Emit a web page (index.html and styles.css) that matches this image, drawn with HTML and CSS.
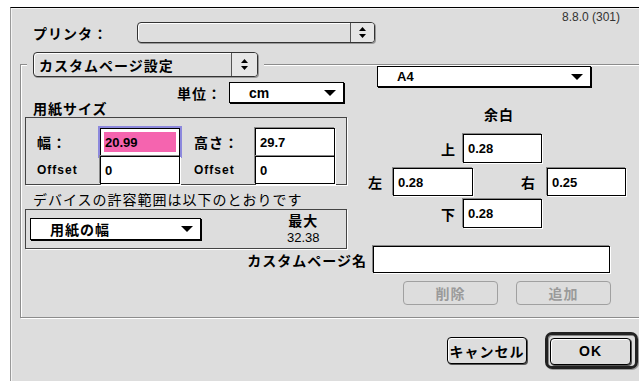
FILE: index.html
```html
<!DOCTYPE html>
<html lang="ja">
<head>
    <meta charset="UTF-8">
    <meta name="viewport" content="width=device-width, initial-scale=1.0">
    <title>カスタムページ設定</title>
    <link rel="stylesheet" href="styles.css">
</head>
<body>

<div class="window">
    <div class="header">
        <span class="label printer-label">プリンタ：</span>
        <div class="popup printer-popup">
            <span class="popup-text"></span>
            <span class="popup-arrows">
                <svg width="7" height="11" viewBox="0 0 7 11"><polygon points="0,4 3.5,0 7,4" /><polygon points="0,7 3.5,11 7,7" /></svg>
            </span>
        </div>
        <span class="version">8.8.0 (301)</span>
    </div>

    <div class="group">
        <div class="left">
            <div class="legend">
                <div class="popup legend-popup">
                    <span class="popup-text">カスタムページ設定</span>
                    <span class="popup-arrows">
                        <svg width="7" height="11" viewBox="0 0 7 11"><polygon points="0,4 3.5,0 7,4" /><polygon points="0,7 3.5,11 7,7" /></svg>
                    </span>
                </div>
            </div>

            <div class="unit-row">
                <span class="label">単位：</span>
                <div class="menu unit-menu">
                    <span class="menu-text">cm</span>
                    <svg class="menu-arrow" width="12" height="6" viewBox="0 0 12 6"><polygon points="0,0 12,0 6,6" /></svg>
                </div>
            </div>

            <div class="label box-title">用紙サイズ</div>
            <div class="box size-box">
                <span class="label cell-label">幅：</span>
                <div class="field focused"><span class="selected">20.99</span></div>
                <span class="label cell-label second">高さ：</span>
                <div class="field">29.7</div>
                <span class="cell-label latin">Offset</span>
                <div class="field">0</div>
                <span class="cell-label second latin">Offset</span>
                <div class="field">0</div>
            </div>

            <div class="box-title plain">デバイスの許容範囲は以下のとおりです</div>
            <div class="box range-box">
                <div class="menu paper-menu">
                    <span class="menu-text label">用紙の幅</span>
                    <svg class="menu-arrow" width="12" height="6" viewBox="0 0 12 6"><polygon points="0,0 12,0 6,6" /></svg>
                </div>
                <div class="max">
                    <span class="label max-title">最大</span>
                    <span class="max-value">32.38</span>
                </div>
            </div>
        </div>

        <div class="right">
            <div class="menu a4-menu">
                <span class="menu-text latin-bold">A4</span>
                <svg class="menu-arrow" width="12" height="6" viewBox="0 0 12 6"><polygon points="0,0 12,0 6,6" /></svg>
            </div>

            <div class="label margin-title">余白</div>

            <div class="margin-row center-row first">
                <span class="label side-label">上</span>
                <div class="field margin-field tall">0.28</div>
            </div>
            <div class="margin-row side-row">
                <span class="label side-label">左</span>
                <div class="field margin-field wide">0.28</div>
                <span class="label side-label right-label">右</span>
                <div class="field margin-field">0.25</div>
            </div>
            <div class="margin-row center-row last">
                <span class="label side-label">下</span>
                <div class="field margin-field tall">0.28</div>
            </div>
        </div>

        <div class="name-row">
            <span class="label name-label">カスタムページ名</span>
            <div class="field name-field"></div>
        </div>

        <div class="button-row">
            <button class="btn disabled">削除</button>
            <button class="btn disabled">追加</button>
        </div>
    </div>

    <div class="dialog-buttons">
        <button class="btn cancel">キャンセル</button>
        <div class="default-ring">
            <button class="btn ok">OK</button>
        </div>
    </div>
</div>

</body>
</html>
```

FILE: styles.css
```css
body {
    margin: 0;
    background: #fff;
    overflow: hidden;
    font-family: "Noto Sans CJK JP", "Liberation Sans", sans-serif;
    color: #000;
}
.window {
    margin: 7px 0 0 10px;
    height: 374px;
    background: #dddddd;
    border-top: 1px solid #000;
    border-left: 1px solid #999;
    box-shadow: inset 1px 1px 0 #f4f4f4;
    overflow: hidden;
}
.label {
    font-size: 14px;
    font-weight: 700;
    letter-spacing: 1px;
    line-height: 16px;
    white-space: nowrap;
}

/* header */
.header {
    display: flex;
    align-items: center;
    margin-top: 14px;
    height: 21px;
    padding-left: 22px;
}
.printer-label {
    width: 104px;
}
.version {
    align-self: flex-start;
    margin-top: -12px;
    margin-left: 187px;
    font-family: "Liberation Sans", sans-serif;
    font-size: 12px;
    line-height: 14px;
    color: #333;
}

/* new style popups */
.popup {
    display: flex;
    box-sizing: border-box;
    border: 1px solid #333;
    border-radius: 4px;
    background: #dedede;
    box-shadow: inset 1px 1px 0 #fff, 1px 1px 0 #999;
}
.printer-popup {
    width: 238px;
    height: 21px;
}
.popup-text {
    flex: 1;
    display: flex;
    align-items: center;
    padding-left: 5px;
    font-size: 14px;
    font-weight: 700;
    letter-spacing: 1px;
}
.popup-arrows {
    width: 23px;
    display: flex;
    align-items: center;
    justify-content: center;
    border-left: 1px solid #555;
    background: #e6e6e6;
    border-radius: 0 3px 3px 0;
}

/* group box, its right edge runs past the window */
.group {
    margin: 21px -12px 0 9px;
    padding: 0 0 12px 4px;
    border: 1px solid #8c8c8c;
    box-shadow: inset 1px 1px 0 #fff, 1px 1px 0 #fff;
    display: grid;
    grid-template-columns: 322px 1fr;
    column-gap: 13px;
    align-items: start;
}
.left, .right {
    display: flex;
    flex-direction: column;
    align-items: flex-start;
}
.legend {
    margin: -13px 0 0 2px;
    padding: 0 6px;
    background: #dddddd;
}
.legend-popup {
    width: 225px;
    height: 25px;
}
.legend-popup .popup-arrows {
    width: 25px;
}

/* old style menus */
.menu {
    display: flex;
    align-items: center;
    box-sizing: border-box;
    height: 21px;
    background: #fff;
    border: 1px solid #000;
    box-shadow: 1px 1px 0 #000;
}
.menu-text {
    padding-left: 19px;
    font-family: "Liberation Sans", sans-serif;
    font-size: 14px;
    font-weight: 700;
}
.menu-text.label {
    font-family: "Noto Sans CJK JP", sans-serif;
}
.menu-arrow {
    margin-left: auto;
    margin-right: 7px;
}
.unit-row {
    align-self: stretch;
    display: flex;
    justify-content: flex-end;
    align-items: center;
    gap: 7px;
    margin: 5px 3px 0 0;
}
.unit-menu {
    width: 115px;
}

/* boxes */
.box-title {
    margin-top: -3px;
    padding-left: 8px;
}
.box-title.plain {
    margin-top: 6px;
    font-size: 14px;
    line-height: 16px;
    letter-spacing: 1px;
    white-space: nowrap;
}
.box {
    align-self: stretch;
    box-sizing: border-box;
    border: 1px solid #444;
    box-shadow: 1px 1px 0 #fff;
}
.size-box {
    margin-top: 1px;
    height: 68px;
    padding-top: 10px;
    display: grid;
    grid-template-columns: 74px 80px 75px 80px;
    grid-auto-rows: 28px;
}
.cell-label {
    align-self: center;
    padding-left: 11px;
}
.cell-label.second {
    padding-left: 14px;
}
.latin {
    font-family: "Liberation Sans", sans-serif;
    font-size: 12px;
    font-weight: 700;
    letter-spacing: 1px;
}
.range-box {
    margin-top: 2px;
    height: 40px;
    display: flex;
    align-items: center;
    padding-left: 4px;
}
.paper-menu {
    width: 171px;
    height: 22px;
}
.max {
    display: flex;
    flex-direction: column;
    align-items: center;
    gap: 2px;
    margin-left: 86px;
}
.max-title {
    line-height: 15px;
}
.max-value {
    font-family: "Liberation Sans", sans-serif;
    font-size: 13px;
    line-height: 15px;
}

/* fields */
.field {
    display: flex;
    align-items: center;
    box-sizing: border-box;
    background: #fff;
    border: 1px solid #000;
    box-shadow: -1px -1px 0 #888, 1px 1px 0 #fff;
    padding-left: 4px;
    font-family: "Liberation Sans", sans-serif;
    font-size: 13px;
    font-weight: 700;
}
.field.focused {
    padding: 3px;
    box-shadow: 0 0 0 2px #8c88dd;
}
.selected {
    flex: 1;
    align-self: stretch;
    display: flex;
    align-items: center;
    padding-left: 1px;
    background: #f564af;
}

/* margins */
.a4-menu {
    margin: 1px 0 0 17px;
    width: 214px;
}
.latin-bold {
    font-size: 13px;
}
.margin-title {
    margin-top: 19px;
    padding-left: 124px;
}
.margin-row {
    display: flex;
    align-items: center;
}
.center-row {
    padding-left: 81px;
}
.center-row.first {
    margin-top: 12px;
}
.center-row.last {
    margin-top: 3px;
}
.side-row {
    margin-top: 5px;
    padding-left: 8px;
}
.side-label {
    width: 22px;
}
.side-row .side-label {
    width: 25px;
}
.side-row .right-label {
    width: 26px;
    margin-left: 48px;
}
.margin-field {
    width: 79px;
    height: 28px;
}
.margin-field.tall {
    height: 29px;
}
.margin-field.wide {
    width: 80px;
}

/* name and buttons */
.name-row {
    grid-column: 1 / -1;
    display: flex;
    align-items: center;
    margin-top: -3px;
}
.name-label {
    width: 342px;
    text-align: right;
    margin-right: 6px;
}
.name-field {
    width: 237px;
    height: 27px;
}
.button-row {
    grid-column: 1 / -1;
    display: flex;
    gap: 18px;
    margin-top: 8px;
    padding-left: 378px;
}
.btn {
    box-sizing: border-box;
    margin: 0;
    padding: 0;
    font-family: "Noto Sans CJK JP", sans-serif;
    font-size: 14px;
    font-weight: 700;
    letter-spacing: 1px;
    line-height: 16px;
    background: #dddddd;
    color: #000;
    border: 1px solid #000;
    border-radius: 4px;
}
.btn.disabled {
    width: 95px;
    height: 24px;
    color: #9a9a9a;
    border-color: #a0a0a0;
}
.dialog-buttons {
    display: flex;
    align-items: center;
    gap: 18px;
    margin-top: 14px;
    padding-left: 436px;
}
.cancel {
    width: 80px;
    height: 27px;
    box-shadow: inset 1px 1px 0 #fff, 1px 1px 0 #555;
}
.default-ring {
    box-sizing: border-box;
    width: 93px;
    height: 37px;
    padding: 2px;
    border: 3px solid #222;
    border-radius: 7px;
    box-shadow: inset 1px 1px 0 #888, 1px 1px 0 #999;
}
.ok {
    width: 81px;
    height: 27px;
    font-family: "Liberation Sans", sans-serif;
    box-shadow: inset 1px 1px 0 #fff, 1px 1px 0 #555;
}
```
